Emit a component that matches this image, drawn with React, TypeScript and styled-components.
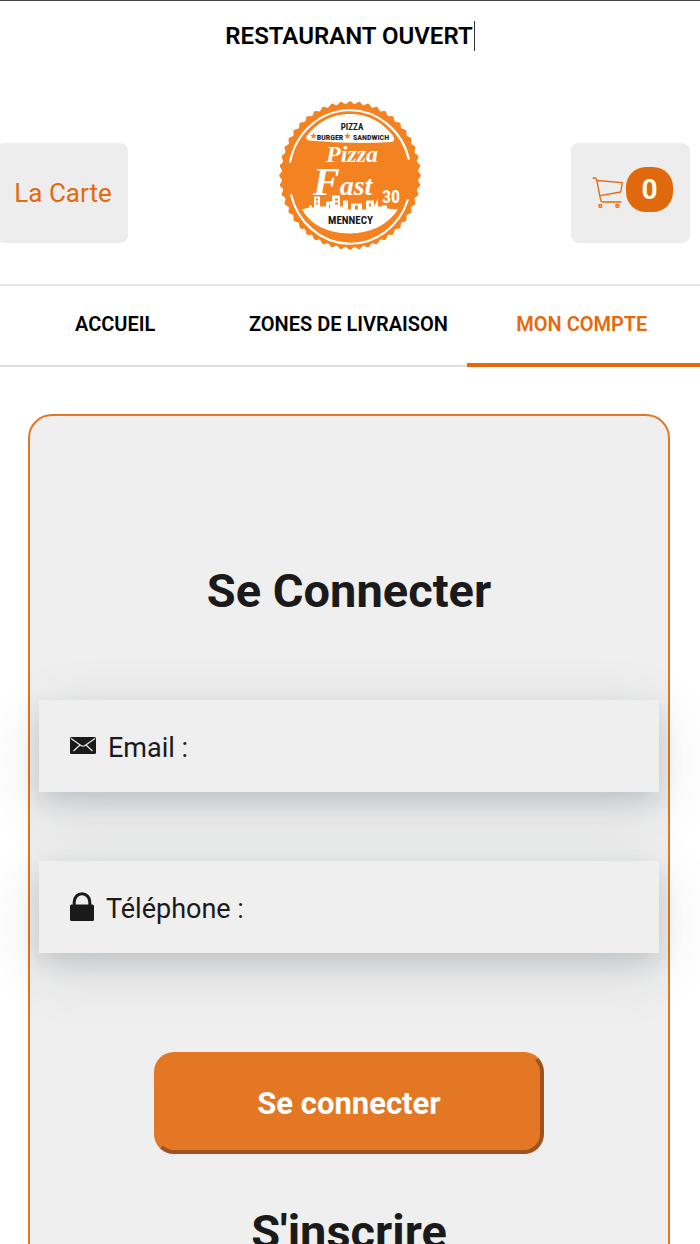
import React from "react";
import styled, { createGlobalStyle } from "styled-components";

const GlobalStyle = createGlobalStyle`
  *, *::before, *::after { box-sizing: border-box; }
  body {
    margin: 0;
    background: #fff;
    color: #1a1a1a;
    font-family: Roboto, "Liberation Sans", sans-serif;
    overflow-x: hidden;
  }
`;

const Status = styled.p`
  display: flex;
  justify-content: center;
  align-items: center;
  margin: 0;
  height: 70px;
  border-top: 1px solid #444;
  color: #000;
  font-size: 24px;
  font-weight: 600;
  line-height: 30px;
`;

const Caret = styled.span`
  width: 1px;
  height: 30px;
  margin-left: 1px;
  background: #333;
`;

const Header = styled.header`
  display: grid;
  grid-template-columns: 1fr auto 1fr;
  align-items: start;
  padding: 31px 0 34px;
  border-bottom: 2px solid #e6e6e6;
`;

const MenuLink = styled.a`
  display: flex;
  justify-content: center;
  align-items: center;
  width: 132px;
  height: 100px;
  margin: 42px 0 0 -4px;
  padding-left: 2px;
  border-radius: 8px;
  background: #ededed;
  color: #e5690d;
  font-size: 26px;
  text-decoration: none;
`;

const CartButton = styled.button`
  display: flex;
  justify-content: center;
  align-items: center;
  justify-self: end;
  gap: 2px;
  width: 119px;
  height: 100px;
  margin: 42px 10px 0 0;
  padding: 0 0 8px 4px;
  border: 0;
  border-radius: 8px;
  background: #ededed;
  font-family: inherit;
`;

const CartGlyph = styled.svg`
  flex: none;
  margin-top: 8px;
`;

const CartCount = styled.span`
  width: 47px;
  height: 45px;
  border-radius: 20px;
  background: #e1690d;
  color: #ffffe6;
  font-size: 28px;
  font-weight: 700;
  line-height: 45px;
  text-align: center;
`;

const Tabs = styled.nav`
  display: grid;
  grid-template-columns: repeat(3, 1fr);
`;

const Tab = styled.a<{ $active?: boolean }>`
  display: flex;
  justify-content: center;
  align-items: center;
  height: 81px;
  padding: 0 3px 5px 0;
  box-shadow: inset 0 ${(p) => (p.$active ? "-4px #e5690d" : "-2px #dedede")};
  color: ${(p) => (p.$active ? "#e5690d" : "#000")};
  font-size: 20px;
  font-weight: 600;
  text-decoration: none;
`;

const Card = styled.main`
  display: flex;
  flex-direction: column;
  align-items: center;
  margin: 47px 30px 40px 28px;
  padding: 145px 9px 60px;
  border: 2px solid #e47723;
  border-radius: 24px;
  background: #efefef;
`;

const Title = styled.h2`
  margin: 0;
  font-size: 47px;
  font-weight: 700;
  line-height: 60px;
`;

const Form = styled.form`
  display: flex;
  flex-direction: column;
  align-items: center;
  gap: 69px;
  width: 100%;
  padding: 79px 0 48px;
`;

const Field = styled.label`
  display: flex;
  align-items: center;
  width: 100%;
  height: 92px;
  padding: 4px 31px 0;
  background: #efefef;
  box-shadow: 0 16px 64px rgba(30, 48, 60, 0.12), 0 10px 22px rgba(30, 40, 55, 0.14);
  font-size: 27px;
`;

const FieldIcon = styled.svg`
  flex: none;
  margin: 0 12px 5px 0;
`;

const FieldInput = styled.input`
  flex: 1;
  min-width: 0;
  margin-left: 8px;
  border: 0;
  outline: 0;
  background: transparent;
  font: inherit;
`;

const Submit = styled.button`
  width: 63%;
  height: 102px;
  margin-top: 30px;
  border: 4px solid;
  border-color: #e47723 #9f5320 #9f5320 #e47723;
  border-radius: 20px;
  background: #e47723;
  color: #fff;
  font-family: inherit;
  font-size: 31px;
  font-weight: 700;
`;

const TEETH = 48;

const badgeEdge = (() => {
  const points: string[] = [];
  const steps = TEETH * 10;
  for (let i = 0; i < steps; i++) {
    const a = (i / steps) * Math.PI * 2;
    const k = 1 + 0.018 * Math.cos(a * TEETH);
    points.push(`${(79 + 69.5 * k * Math.sin(a)).toFixed(2)} ${(81 - 73 * k * Math.cos(a)).toFixed(2)}`);
  }
  return `M${points.join("L")}Z`;
})();

const Star = ({ x, y }: { x: number; y: number }) => (
  <path
    transform={`translate(${x} ${y})`}
    fill="#f58220"
    d="M0-3.4 1-1 3.3-1 1.5.6 2.2 3 0 1.6-2.2 3-1.5.6-3.3-1-1-1Z"
  />
);

const narrow = '"Liberation Sans Narrow", "Roboto Condensed", Roboto, sans-serif';

const Logo = () => (
  <svg width="142" height="149" viewBox="8 6.5 142 149" role="img" aria-label="Pizza Fast 30 Mennecy">
    <path d={badgeEdge} fill="#f58220" />
    <g fill="none" stroke="#fff" strokeWidth="2.2">
      <path d="M19 68A61 65 0 0 1 138 65" />
      <path d="M20 100A61 65 0 0 0 137 105" />
    </g>
    <path fill="#fff" d="M36 41A56 60 0 0 1 122 41Q125 47 120 47.500Q79 50 38 46Q34 45 36 41Z" />
    <path
      fill="#fff"
      d="M31 115 38 113V111H41V113H43V102H49V112H55V107H61V101H69V112H72V106H77V115H80V109H91V115H95V106H103V112L107 104V112H111V111H116V114L127 115Q111 138.500 78.500 139Q44 138 31 115Z"
    />
    <path
      fill="#f58220"
      d="M45 104H47V106H45ZM45 108H47V110H45ZM64 104H67V106H64ZM64 108H67V110H64ZM98 109H100V112H98ZM58 110H59V114H58ZM84 111H87V115H84Z"
    />
    <g fontFamily={narrow} fontWeight="700" fill="#171717" textAnchor="middle">
      <text x="81" y="35" fontSize="9">PIZZA</text>
      <text x="59" y="45" fontSize="8">BURGER</text>
      <text x="100" y="45" fontSize="8">SANDWICH</text>
      <text x="79.500" y="129" fontSize="11">MENNECY</text>
    </g>
    <Star x={42.500} y={41.500} />
    <Star x={76.500} y={41.500} />
    <g fill="#fff" fontFamily='"Liberation Serif", serif' fontStyle="italic" fontWeight="700">
      <text x="55" y="67" fontSize="24">Pizza</text>
      <text x="42" y="100" fontSize="40">
        F<tspan fontSize="28">ast</tspan>
      </text>
    </g>
    <text x="111" y="108" fontSize="18" fontFamily={narrow} fontWeight="700" fill="#fff">30</text>
  </svg>
);

const CartIcon = () => (
  <CartGlyph width="32" height="32" viewBox="94 139 96 96" fill="none" stroke="#e5690d" strokeWidth="4" aria-hidden="true">
    <path d="M96 142H103Q107 142 108 148L120 208Q121 214 126 214H182" />
    <path d="M109 149.500 185 156 180 184 119 195" strokeLinejoin="round" />
    <circle cx="119" cy="226" r="4.500" />
    <circle cx="170" cy="226" r="4.500" />
  </CartGlyph>
);

const MailIcon = () => (
  <FieldIcon width="26" height="17" viewBox="0 0 26 17" aria-hidden="true">
    <rect width="26" height="17" rx="1.500" fill="#1a1a1a" />
    <path d="M1 1.500 11 8.500Q13 9.800 15 8.500L25 1.500M10 8 3.500 14M16 8 22.500 14" fill="none" stroke="#efefef" strokeWidth="1.100" />
  </FieldIcon>
);

const LockIcon = () => (
  <FieldIcon width="24" height="29" viewBox="0 0 24 29" aria-hidden="true">
    <rect y="12.500" width="24" height="16.500" rx="1.500" fill="#1a1a1a" />
    <path d="M4.200 13.500V10A7.800 8.300 0 0 1 19.800 10V13.500" fill="none" stroke="#1a1a1a" strokeWidth="3" />
  </FieldIcon>
);

export default function App() {
  return (
    <>
      <GlobalStyle />
      <Status>
        RESTAURANT OUVERT
        <Caret />
      </Status>
      <Header>
        <MenuLink href="#carte">La Carte</MenuLink>
        <Logo />
        <CartButton type="button" aria-label="Panier">
          <CartIcon />
          <CartCount>0</CartCount>
        </CartButton>
      </Header>
      <Tabs>
        <Tab href="#accueil">ACCUEIL</Tab>
        <Tab href="#zones">ZONES DE LIVRAISON</Tab>
        <Tab href="#compte" $active>MON COMPTE</Tab>
      </Tabs>
      <Card>
        <Title>Se Connecter</Title>
        <Form onSubmit={(e) => e.preventDefault()}>
          <Field>
            <MailIcon />
            Email :
            <FieldInput type="email" name="email" />
          </Field>
          <Field>
            <LockIcon />
            Téléphone :
            <FieldInput type="tel" name="telephone" />
          </Field>
          <Submit type="submit">Se connecter</Submit>
        </Form>
        <Title>S'inscrire</Title>
      </Card>
    </>
  );
}
